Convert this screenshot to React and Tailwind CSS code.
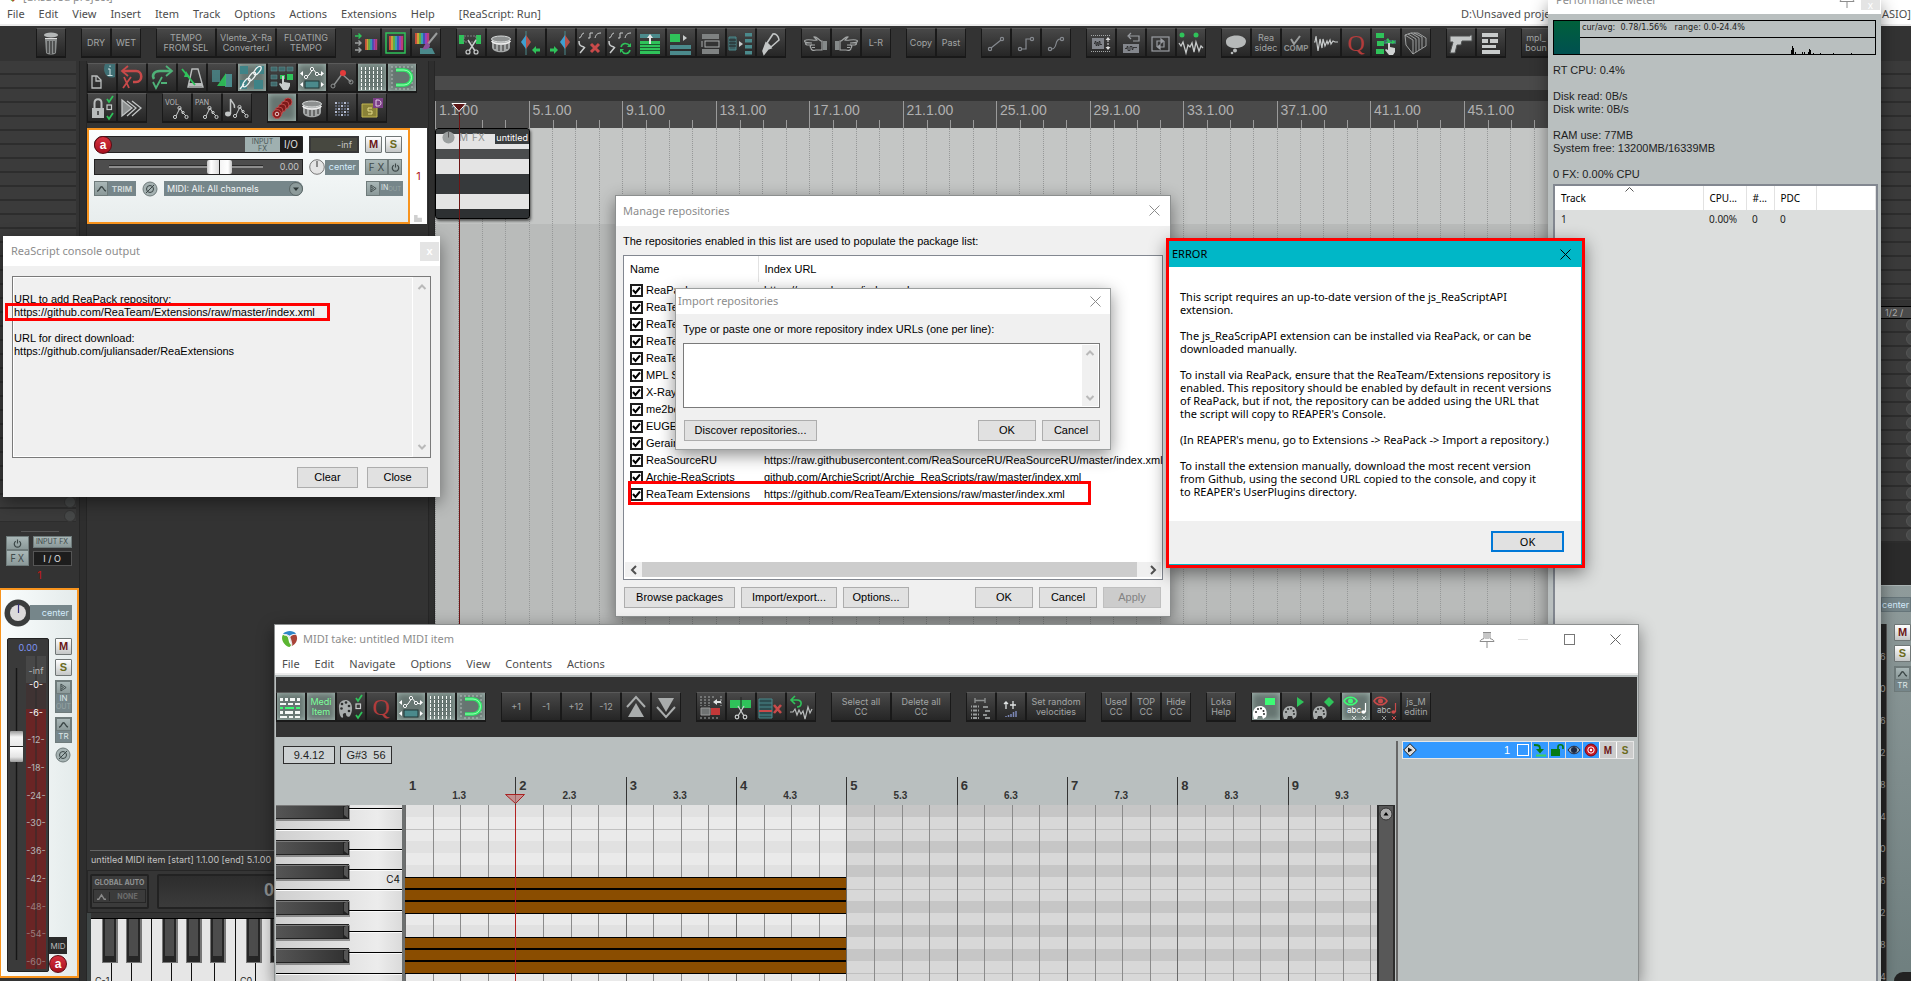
const UI = "font-['Noto_Sans',sans-serif]";
const PIX = "font-['Inter',sans-serif]";
const SHADOW = "shadow-[0_5px_16px_rgba(0,0,0,0.45)]";

/* ---------- toolbar drawings, each on a 28 x 28 field ---------- */
const G = "#2fc35a";
const T = "#4b8a8c";
const W = "#c9cccc";
const R = "#c94a4a";

const Curves = () => (
  <g fill="none" stroke={W}>
    <path d="M2 9c3 0 2-5 5-5M11 9h2V4h3M18 9c1-4 3-5 6-5" />
    <path d="M2 12c0 4 1 5 5 6M3 24l5-6" strokeWidth="1.5" />
  </g>
);
const Magnet = () => (
  <g fill="none">
    <path d="M4 2v24M8 2v2M12 2v2M16 2v2M8 24v3M12 24v3M16 24v3M20 2v3M24 2v24M20 24v2" stroke="#dfe8e4" strokeDasharray="2 2" opacity=".6" />
    <path d="M8 6h8a7 7 0 0 1 0 15H8" stroke="#2de866" strokeWidth="3.6" />
    <path d="M8 6h8a7 7 0 0 1 0 15H8" stroke="#b6ffc9" strokeWidth=".8" />
  </g>
);
const GridLines = () => (
  <path d="M3.500 3v23M7.500 3v23M11.500 3v23M15.500 3v23M19.500 3v23M23.500 3v23" stroke="#f4f8f6" strokeDasharray="3 1" fill="none" />
);
const EnvStretch = () => (
  <g>
    <path d="M7 14l4-3 4-6 4 5 5 1" stroke="#fff" fill="none" />
    <g fill="#4f5f5c" stroke="#fff"><circle cx="8" cy="13" r="1.6" /><circle cx="14" cy="5" r="1.6" /><circle cx="19" cy="10" r="1.6" /></g>
    <rect x="7" y="17" width="14" height="7" fill={T} stroke="#1f3434" />
    <path d="M5 7v5L2 9.500zM23 7v5l3-2.500zM5 18v5l-3-2.500zM23 18v5l3-2.500z" fill="#fff" />
  </g>
);
const Drum = () => (
  <g>
    <path d="M5 10v8c0 7 18 7 18 0v-8z" fill="#a4a7a7" />
    <ellipse cx="14" cy="10" rx="9.500" ry="3" fill="#8d9090" stroke="#d9dcdc" />
    <path d="M8 14v6M12 16v6M16 16v6M20 14v6" stroke="#4a4a4a" strokeWidth="1.300" />
    <path d="M4.500 12c3 4 16 4 19 0" stroke="#eee" strokeWidth="1.300" fill="none" />
  </g>
);
const Check3 = ({ x }) => (
  <g fill="none" stroke={G} strokeWidth="1.8">
    <path d={`M${x} 5l2 3 4-6M${x} 22l2 3 4-6`} />
    <rect x={x} y="11" width="4.500" height="4.500" stroke={W} strokeWidth="1.2" />
  </g>
);
const Palette = ({ fill = "#a9adad", y = 0 }) => (
  <g transform={`translate(0 ${y})`}>
    <path d="M2 14C1 4 15 3 15 14c0 4-1 6-2 8-2 2-4 0-4-2s-4-1-3 2-4 3-4-8z" fill={fill} />
    <g fill="#2d2f2f"><circle cx="5" cy="10" r="1.300" /><circle cx="9" cy="8.500" r="1.300" /><circle cx="12" cy="12" r="1.300" /><circle cx="4.500" cy="14.500" r="1.300" /><circle cx="12" cy="17" r="1.300" /></g>
  </g>
);
const Palette2 = ({ fill = "#a9adad" }) => (
  <g>
    <path d="M2 26c-3-8 1-13 6-13s8 4 6 11l-3 2-1-3H6l-1 3z" fill={fill} />
    <g fill="#2d2f2f"><circle cx="4" cy="19" r="1" /><circle cx="6" cy="16" r="1" /><circle cx="9" cy="15.500" r="1" /><circle cx="11.500" cy="18" r="1" /><circle cx="12" cy="21" r="1" /></g>
  </g>
);
const Hand = ({ flip }) => (
  <g transform={flip ? "translate(28 0) scale(-1 1)" : undefined}>
    <path d="M4 11c4-1 8 1 11 0l-3-3c2-1 4 2 7 4h1v9h-6c-3 1-5 0-5-2-1-1-1-2 0-3H5c-2-1-2-2 0-2h5c-2 0-6 0-7-1-1-1 0-2 1-2z" fill="none" stroke="#a3a6a6" strokeWidth="1.200" />
    <path d="M21 12h4v9h-4z" fill="#858989" />
    <path d="M9 16h4M10 18.500h3" stroke="#a3a6a6" />
  </g>
);
const Rainbow = ({ x, y, w, h }) => {
  const c = ["#c94f3b", "#c9a23b", "#5fae43", "#3ba2af", "#3f55b9", "#9a3fb9", "#b93f7a"];
  return c.map((f, i) => <rect key={f} x={x + (i * w) / 7} y={y} width={w / 7 + 0.2} height={h} fill={f} />);
};
const Env = ({ x = 10, y = 10 }) => (
  <g transform={`translate(${x} ${y})`} fill="none" stroke={W}>
    <path d="M3 12l4-8 3 5 3 3" />
    <circle cx="2" cy="13" r="1.600" /><circle cx="6.500" cy="4" r="1.600" /><circle cx="13.500" cy="13" r="1.600" /><circle cx="10" cy="8.500" r="1.200" />
  </g>
);
const Eye = ({ c }) => (
  <g>
    <path d="M2 8c3-5 10-5 13 0-3 5-10 5-13 0z" fill="none" stroke={c} strokeWidth="1.600" />
    <circle cx="8.500" cy="8" r="2.500" fill={c} />
  </g>
);
const Note = ({ c }) => (
  <g><ellipse cx="21.500" cy="19" rx="2.200" ry="1.700" fill={c} /><path d="M23.500 19v-9" stroke={c} strokeWidth="1.200" /></g>
);

const ICONS = {
  trash: <g><ellipse cx="14" cy="6" rx="7" ry="2.600" fill="#b5b8b8" /><path d="M8 10l1 14c2 2 8 2 10 0l1-14z" fill="#8b8e8e" /><path d="M11 12v12M14 12v13M17 12v12" stroke="#2b2b2b" strokeWidth="1.200" /><path d="M8 9.500h12" stroke="#ddd" /></g>,
  arrowsRainbow: <g><Rainbow x={13} y={10} w={12} h={11} /><path d="M3 7h6M6.500 4.500L9 7 6.500 9.500" stroke={G} fill="none" strokeWidth="1.400" /><path d="M3 14h6M6.500 11.500L9 14l-2.500 2.500M3 21h6M6.500 18.500L9 21l-2.500 2.500" stroke="#9da0a0" fill="none" strokeWidth="1.400" /></g>,
  rainbowFrame: <g><Rainbow x={7} y={7} w={14} h={14} /><rect x="4" y="4" width="19" height="20" fill="none" stroke={G} strokeWidth="1.500" /></g>,
  brush: <g><Rainbow x={3} y={4} w={14} h={11} /><path d="M8 19h12l3 6H8z" fill={T} /><path d="M25 4l-9 11" stroke="#9a9d9d" strokeWidth="2" /><path d="M16 14c-4 0-4 5-6 6 4 1 8 0 8-4z" fill="#8d4f9a" /></g>,
  cut: <g><path d="M2 6h5v9H2zM19 6h5v9h-5z" fill={G} /><path d="M7 7h12v6H7z" fill="none" stroke="#7d8080" strokeDasharray="2 1" /><path d="M11 11l7 11M19 11l-7 11" stroke={W} strokeWidth="1.400" /><g fill="none" stroke={W} strokeWidth="1.200"><circle cx="11" cy="23" r="2" /><circle cx="19" cy="23" r="2" /></g></g>,
  drum: <Drum />,
  diaLeft: <g><path d="M9 2v24" stroke={T} /><path d="M9 6v14l-5-7z" fill="#3f9fd0" /><path d="M9 6v14l5-7z" fill="#b8524a" /><path d="M15 21l4-4v2.500h4v3h-4V25z" fill={G} /></g>,
  diaRight: <g><path d="M18 2v24" stroke={T} /><path d="M18 6v14l-5-7z" fill="#3f9fd0" /><path d="M18 6v14l5-7z" fill="#b8524a" /><path d="M11 21l-4-4v2.500H3v3h4V25z" fill={G} /></g>,
  curveX: <g><Curves /><path d="M14 15l8 8M22 15l-8 8" stroke={R} strokeWidth="3" /></g>,
  curveLoop: <g><Curves /><path d="M14 18c1-4 6-5 9-1M23 21c-1 4-6 5-8 1" fill="none" stroke={G} strokeWidth="1.600" /><path d="M24 14v4h-4zM13 24v-4h4z" fill={G} /></g>,
  upBlock: <g><path d="M3 5h20v4H3z" fill={T} /><path d="M3 12h20v13H3z" fill={G} /><path d="M3 15.500h20M3 18.500h20M3 21.500h20" stroke="#1c5c30" /><path d="M13 5l3 4h-2v6h-2V9h-2z" fill="#e4e6e6" /></g>,
  blockRight: <g><path d="M3 5h10v8H3z" fill={G} /><path d="M16 6l4 3-4 3z" fill={W} /><path d="M3 16h21v4H3zM3 22h21v4H3z" fill={T} /></g>,
  stack: <g><path d="M5 5h17v5H5zM5 20h17v5H5z" fill="#7f8282" /><rect x="8" y="12" width="14" height="6" fill="#333" stroke="#a9acac" /><path d="M5 12v6" stroke="#a9acac" /></g>,
  splitCols: <g><path d="M2 8h7v13H2z" fill="#3d5d60" stroke={T} /><path d="M2 11h7M2 14h7M2 17h7" stroke="#222" /><path d="M12 12l4 3-4 3z" fill={W} /><path d="M18 4h7v3.500h-7zM18 10h7v3.500h-7zM18 16h7v3.500h-7zM18 22h7v3.500h-7z" fill={T} /></g>,
  marker: <g fill="none" stroke="#c2c5c5" strokeWidth="1.600"><path d="M10 14l6-9c3-1 6 3 6 6l-8 7z" /><path d="M9 14l5 5-3 1-4 5-1-3z" fill="#c2c5c5" /></g>,
  handL: <Hand />,
  handR: <Hand flip />,
  ramp: <g fill="none" stroke="#85898f" strokeWidth="1.200"><circle cx="8" cy="20" r="1.600" /><circle cx="20" cy="10" r="1.600" /><path d="M9 19l10-8" /></g>,
  square: <g fill="none" stroke="#85898f" strokeWidth="1.200"><circle cx="8" cy="20" r="1.600" /><circle cx="20" cy="10" r="1.600" /><path d="M9.500 20H14V10h4.500" /></g>,
  smooth: <g fill="none" stroke="#85898f" strokeWidth="1.200"><circle cx="8" cy="20" r="1.600" /><circle cx="20" cy="10" r="1.600" /><path d="M9.500 20c7 0 2-10 9-10" /></g>,
  itemHeight: <g><path d="M4 6.500h20M4 22.500h20" stroke="#a4a7a7" strokeDasharray="1 1" /><path d="M5 9h12v11H5z" fill="#83868c" /><path d="M7 14.500h1v-2h1v4h1v-3h1v3h1v-4h1v3h2" stroke="#222" fill="none" strokeWidth=".8" /><path d="M21 8l2.500 3h-5zM21 21l2.500-3h-5z" fill="#ddd" /><path d="M21 11v7" stroke="#ddd" strokeDasharray="2 1" /></g>,
  undoWave: <g><path d="M6 15h16v9H6z" fill="#83868c" /><path d="M8 19.500h2v-2h1v4h2v-4h2v3h1v-2h4" stroke="#222" fill="none" strokeWidth=".8" /><path d="M12 7h10v5h-6M14 4l-3 3 3 3" stroke="#9a9da2" fill="none" strokeWidth="1.200" /></g>,
  loopBox: <g fill="none" stroke="#9a9da2" strokeWidth="1.200"><rect x="5" y="8" width="17" height="14" /><path d="M10 18v-6h5M17 12v6h-5" /><path d="M14 10l2.500 2-2.500 2zM13 16l-2.500 2 2.500 2z" fill="#9a9da2" /></g>,
  peaks: <g><circle cx="5" cy="6" r="2.500" fill={G} /><circle cx="19" cy="6" r="2.500" fill={G} /><path d="M2 14l2 3 2-4 3 11 2-8 2 2 2-4 2 9 2-10 3 9 2-5 2 2" fill="none" stroke="#c6c9c9" strokeWidth="1.300" /></g>,
  chat: <g fill="#b6b9b9"><path d="M4 13C3 5 23 4 24 12c0 6-7 7-10 7-6 0-10-2-10-6z" /><circle cx="13" cy="21.500" r="2" /><circle cx="10" cy="24" r="1.300" /></g>,
  comp: <path d="M9 10l3 5 6-8" fill="none" stroke="#9a9d9d" strokeWidth="2" />,
  wave: <path d="M2 13h1l1-6 2 15 2-12 2 9 1-9 2 7 2-5 1 3 2-4 1 4 2-3 2 1 3 0" fill="none" stroke="#c6c9c9" strokeWidth="1.200" />,
  greenHand: <g><path d="M4 4h8v5H4zM5 12h7v5H5zM4 20h8v5H4z" fill={G} /><path d="M12 11h12v4H12z" fill="#3f6a6c" /><path d="M13 14l3-2-2-1 2-2 2 3h-1l3 1v-2l4 2-4 2v-1" fill={G} /><path d="M16 14h2v4l5 1v4l-2 3h-4l-4-5 1-1 2 1z" fill="#cfd2d2" /></g>,
  layers: <g fill="none" stroke="#a9acac" strokeWidth=".9"><path d="M3 6l8 5v14l-7-9zM6 5l8 5v13M9 4l8 5v12M12 4l8 4v11M3 6l3-1 3-1h7l8 5v8l-13 8" /></g>,
  gun: <path d="M3 7h20v-1h2v6H15l-1 4h-4l-2 8H3l3-11H3z" fill="#c4c7c7" stroke="#4d4f4f" />,
  rows: <g fill="#c9cccc"><path d="M5 4h16v4H5zM5 10h6v4H5zM13 10h8v4h-8zM5 16h14v3H5zM5 21h18v4H5z" /></g>,
  info: <g><path d="M17 0h10v13c-9 3-13-6-10-13z" fill="#3f6f74" /><path d="M20 5h2v6M19.500 11.500h5M22 1.500V3" stroke="#cfe3e4" fill="none" /><path d="M4 12h5l4 4v8H4zM8 12v5h5" fill="none" stroke="#b9bcbc" strokeWidth="1.300" /></g>,
  undo: <g fill="none" stroke={R}><path d="M5 7h13c7 0 7 11 0 11h-3" strokeWidth="2.600" /><path d="M10 2L4 7l6 5" strokeWidth="1.800" /><path d="M6 13l5 11M13 13L5 24" strokeWidth="1.800" /></g>,
  redo: <g fill="none" stroke="#4fb278"><path d="M23 7H12C5 7 4 12 6 15" strokeWidth="2.600" /><path d="M18 2l6 5-6 5" strokeWidth="1.800" /><path d="M5 18l3 6 6-11M13 19h6" strokeWidth="1.800" /></g>,
  metro: <g fill="none" strokeWidth="1.400"><path d="M14 5l-4 18h15L20 5z" stroke="#b9bcbc" /><path d="M11 20.500h13" stroke="#b9bcbc" strokeWidth="3" /><path d="M4 5l13 16" stroke={G} strokeWidth="1.800" /><path d="M8 7l4 6-6 0z" fill={G} /></g>,
  xfade: <g><path d="M4 6h8v12H4z" fill={T} opacity=".8" /><path d="M17 10h7v13h-7z" fill={T} /><path d="M9 22l9-13v13z" fill={G} opacity=".9" /></g>,
  link: <g><path d="M2 2h8v8H2zM18 2h8v8h-8zM2 16h7v9H2zM16 16h9v9h-9z" fill="#3f8387" /><g fill="none" stroke="#f0f4f4" strokeWidth="1.300"><path d="M2 25l4-5" /><ellipse cx="8.500" cy="18.500" rx="2.300" ry="5" transform="rotate(38 8.500 18.500)" /><ellipse cx="14" cy="12.500" rx="2.300" ry="5" transform="rotate(38 14 12.500)" /><ellipse cx="19.500" cy="6.500" rx="2.300" ry="5" transform="rotate(38 19.500 6.500)" /></g></g>,
  gridHand: <g><path d="M3 3h6v4H3zM11 3h6v4h-6zM19 3h6v4h-6zM3 11h6v4H3zM3 18h6v4H3z" fill="#3f6a6c" stroke="#5f8c8e" strokeWidth=".6" /><path d="M12 11h5v4h-5zM19 10h6v6h-6z" fill={G} /><path d="M14 12h2v6l6 1v3l-2 4h-5l-4-6 1-1 2 1z" fill="#c9cccc" /></g>,
  envStretch: <EnvStretch />,
  envRed: <g><path d="M6 21l8-11M14 10l9 8" stroke="#8d9090" strokeWidth="1.400" /><circle cx="5" cy="22" r="2" fill="none" stroke="#8d9090" /><circle cx="23" cy="18" r="2" fill="none" stroke="#8d9090" /><circle cx="15" cy="9" r="3" fill="#e23b3b" /></g>,
  gridLines: <GridLines />,
  magnet: <Magnet />,
  lock: <g><path d="M4 14h12v10H4z" fill="#b9bcbc" /><path d="M6.500 14V9c0-5 7-5 7 0v5" fill="none" stroke="#b9bcbc" strokeWidth="2" /><path d="M10 17v4" stroke="#333" strokeWidth="1.500" /><Check3 x={19} /></g>,
  ffwd: <g><path d="M4 6l10 8-10 8z" fill="#8d9090" /><path d="M4 6l10 8-10 8zM9 7l9 7-9 8M14 7l9 7-9 8" stroke="#c2c5c5" fill="none" strokeWidth="1.300" /></g>,
  vol: <Env />,
  pan: <Env />,
  noteEnv: <g><ellipse cx="5" cy="20" rx="3" ry="2.400" fill="#c2c5c5" /><path d="M7.500 20V5c1 4 5 4 4 9" fill="none" stroke="#c2c5c5" strokeWidth="1.500" /><Env x={10} y={9} /></g>,
  coil: <g fill="#7d1a1a" stroke="#c05050" strokeWidth=".9">{[0, 1, 2, 3].map((i) => <circle key={i} cx={20 - i * 3} cy={8 + i * 3} r="4" />)}<circle cx="9" cy="20" r="4.500" fill="#8a1c1c" /><circle cx="9" cy="20" r="1.800" fill="none" stroke="#f0dcdc" /></g>,
  dots: <g>{[0, 1, 2, 3, 4].flatMap((r) => [0, 1, 2, 3, 4].map((c) => <rect key={`${r}${c}`} x={7 + c * 3} y={8 + r * 3} width="2" height="2" fill={(r + c) % 3 ? "#5f6675" : "#b3bbd0"} />))}</g>,
  sd: <g><path d="M4 10h15v13H4z" fill="#8a8238" stroke="#c2b64f" /><path d="M14 14h-4v3h4v3h-4" fill="none" stroke="#e6dc8a" /><path d="M15 4h10v10H15z" fill="#7b3f86" /><path d="M18 6h2c4 0 4 6 0 6h-2z" fill="none" stroke="#e3c9e8" /></g>,
  midiRows: <g fill="#f4f8f6"><path d="M3 5h3v3H3zM8 5h3v3H8zM13 5h5v3h-5zM20 5h3v3h-3zM3 10h6v2H3zM11 10h5v2h-5zM18 10h5v2h-5zM3 18h3v3H3zM8 18h8v3H8zM18 18h5v3h-5zM3 23h7v2H3zM12 23h4v2h-4zM18 23h5v2h-5z" /><path d="M3 14h3v2H3zM8 14h9v2H8zM19 14h4v2h-4z" fill="#3dfc75" /></g>,
  paletteCheck: <g><Palette y={1} /><Check3 x={19} /></g>,
  up: <g><path d="M5 14l9-10 9 10" fill="none" stroke="#aaadad" strokeWidth="2" /><path d="M14 10l8 14H6z" fill="#aaadad" /></g>,
  down: <g><path d="M5 14l9 10 9-10" fill="none" stroke="#aaadad" strokeWidth="2" /><path d="M14 19L22 5H6z" fill="#aaadad" /></g>,
  trimRed: <g><path d="M4 15h9v7H4z" fill="#6f7272" stroke="#999" /><path d="M14 15h9v7h-9z" fill="#c23838" /><path d="M4 3v10M8 3v10M12 3v10M4 24v3M8 24v3M12 24v3M16 24v3M20 24v3M16 3v3M24 3v10" stroke="#a6a9a9" strokeDasharray="2 1" /><path d="M16 9l4-3v2h4v2h-4v2z" fill="#dfe2e2" /></g>,
  cutMidi: <g><path d="M3 7h21v8H3z" fill={G} /><path d="M14 4v12" stroke="#222" /><path d="M11 13l6 10M17 13l-6 10" stroke={W} strokeWidth="1.300" /><g fill="none" stroke={W} strokeWidth="1.200"><circle cx="10" cy="24" r="1.800" /><circle cx="18" cy="24" r="1.800" /></g></g>,
  listX: <g><path d="M2 6h13v19H2z" fill="#2d4d50" stroke={T} /><path d="M2 10h13M2 14h13M2 22h13" stroke={T} /><path d="M2 18h13" stroke={R} strokeWidth="2" /><path d="M17 12l7 8M24 12l-7 8" stroke={R} strokeWidth="2.600" /></g>,
  undoEcg: <g fill="none"><path d="M8 3L4 7l4 4M4 7h6c6 0 5 7 0 7" stroke={G} strokeWidth="1.600" /><path d="M3 19h3l2-3 2 6 2-5 2 4 2-3 2 8 3-12 2 6 2-4" stroke="#b9bcbc" strokeWidth="1.200" /></g>,
  velRows: <g><path d="M8 5v5M18 5v5M8 7.500h10" stroke="#8d9090" strokeWidth="1.400" /><path d="M4 13.500h8M4 17.500h8M4 21.500h8M4 25h8" stroke="#9a9d9d" strokeWidth="2" strokeDasharray="1 1 4 1" /><path d="M16 14h5M18 18h5M16 22h4M18 25h5" stroke="#8d9090" strokeWidth="2" /></g>,
  arrowsUp: <g stroke="#dfe2e2" fill="none"><path d="M9 9v7M7 11l2-2 2 2M16 8v8M13 12h6" strokeWidth="1.300" /><path d="M9 24v-1M11.500 24v-2M14 24v-3M16.500 24v-5M19 24v-6" stroke="#7c88b8" strokeWidth="1.500" /></g>,
  palRect: <g><path d="M13 5h10v7H13z" fill="#3dfc75" /><Palette2 fill="#fff" /></g>,
  palTri: <g><path d="M15 4l7 5-7 5z" fill={G} /><Palette2 /></g>,
  palDia: <g><path d="M17 4l5 5-5 5-5-5z" fill={G} /><Palette2 /></g>,
  eyeG: <g><Eye c="#3dfc75" /><Note c="#fff" /><path d="M10 23l4 4M14 23l-4 4M20 23l4 4M24 23l-4 4" stroke="#cfd6d4" /></g>,
  eyeR: <g><Eye c={R} /><Note c={R} /><path d="M10 23l4 4M14 23l-4 4" stroke="#8d9090" /><path d="M20 23l4 4M24 23l-4 4" stroke={R} /></g>,
};
const OVER = {
  comp: <span className="absolute inset-x-0 bottom-[3px] text-[8px] font-bold leading-[9px] text-[#8f9292]">COMP</span>,
  vol: <span className="absolute left-[2px] top-[4px] text-[7px] leading-[9px] text-[#b9bcbc]">VOL</span>,
  pan: <span className="absolute left-[2px] top-[4px] text-[7px] leading-[9px] text-[#b9bcbc]">PAN</span>,
  eyeG: <span className="absolute left-[5px] top-[13px] text-[8px] leading-[9px] text-white">abc</span>,
  eyeR: <span className="absolute left-[5px] top-[13px] text-[8px] leading-[9px] text-[#b9bcbc]">abc</span>,
};
const NORMAL = "bg-linear-to-b from-[#484848] to-[#262626] border-t-[#5a5a5a] text-[#a2a5a5]";
const ACTIVE = "bg-[#667571] shadow-[inset_0_0_6px_#a7bab4] border-t-[#5a5a5a] text-[#7dff9b]";

/* An item is "icon", "*icon" when switched on, or [label, "w"?] for a text key. */
function Tool({ item }) {
  if (Array.isArray(item)) {
    const [label, kind] = item;
    return (
      <button className={`flex h-[30px] shrink-0 items-center justify-center overflow-hidden border border-b-2 border-[#191919] text-center text-[9px] leading-[10px] whitespace-pre ${kind === "w" ? "w-[60px]" : "w-[30px]"} ${kind === "on" ? ACTIVE : NORMAL}`}>
        {label}
      </button>
    );
  }
  if (item === "Q") return <button className={`flex h-[30px] w-[30px] shrink-0 items-center justify-center border border-b-2 border-[#191919] font-['Liberation_Serif',serif] text-[24px] leading-6 ${NORMAL}`}><span className="text-[#b23c3c]">Q</span></button>;
  const on = item[0] === "*";
  const name = on ? item.slice(1) : item;
  return (
    <button aria-label={name} className={`relative h-[30px] w-[30px] shrink-0 overflow-hidden border border-b-2 border-[#191919] ${on ? ACTIVE : NORMAL}`}>
      <svg viewBox="0 0 28 28" className="block h-[28px] w-[28px]">{ICONS[name]}</svg>
      {OVER[name]}
    </button>
  );
}
function Toolbar({ groups, className = "" }) {
  return (
    <div className={`flex shrink-0 gap-[15px] ${PIX} ${className}`}>
      {groups.map((g, i) => <div key={i} className="flex shrink-0">{g.map((it, j) => <Tool key={j} item={it} />)}</div>)}
    </div>
  );
}

const MAIN_TOOLS = [
  ["trash"],
  [["DRY"], ["WET"]],
  [["TEMPO\nFROM SEL", "w"], ["Vlente_X-Ra\nConverter.l", "w"], ["FLOATING\nTEMPO", "w"]],
  ["arrowsRainbow", "rainbowFrame", "brush"],
  ["cut", "drum", "diaLeft", "diaRight", "curveX", "curveLoop", "upBlock", "blockRight", "stack", "splitCols", "marker"],
  ["handL", "handR", ["L-R"]],
  [["Copy"], ["Past"]],
  ["ramp", "square", "smooth"],
  ["itemHeight", "undoWave", "loopBox", "peaks"],
  ["chat", ["Rea\nsidec"], "comp", "wave", "Q", "greenHand", "layers"],
  ["gun", "rows"],
  [["mpl_\nboun"]],
];
const TCP_ROW1 = [["info", "undo", "redo", "metro", "xfade", "*link", "gridHand", "*envStretch", "envRed", "*gridLines", "*magnet"]];
const TCP_ROW2 = [["lock", "ffwd"], ["vol", "pan", "noteEnv"], ["*coil", "drum", "dots", "sd"]];
const MIDI_TOOLS = [
  ["*midiRows", ["Medi\nItem", "on"], "paletteCheck", "Q", "*envStretch", "*gridLines", "*magnet"],
  [["+1"], ["-1"], ["+12"], ["-12"], "up", "down"],
  ["trimRed", "cutMidi", "listX", "undoEcg"],
  [["Select all\nCC", "w"], ["Delete all\nCC", "w"]],
  ["velRows", "arrowsUp", ["Set random\nvelocities", "w"]],
  [["Used\nCC"], ["TOP\nCC"], ["Hide\nCC"]],
  [["Loka\nHelp"]],
  ["*palRect", "palTri", "palDia", "*eyeG", "eyeR", ["js_M\neditin"]],
];

/* ---------- small shared controls ---------- */
const Cross = ({ className = "text-[#8c8c8c]" }) => (
  <svg viewBox="0 0 11 11" className={`h-[11px] w-[11px] ${className}`} stroke="currentColor" fill="none"><path d="M.5.5l10 10M10.500.5l-10 10" /></svg>
);
const Chev = ({ d, className = "text-[#b9b9b9]" }) => (
  <svg viewBox="0 0 10 10" className={`h-[10px] w-[10px] ${className}`} stroke="currentColor" strokeWidth="2" fill="none">
    <path d={{ up: "M1.500 7L5 3.500 8.500 7", down: "M1.500 3L5 6.500 8.500 3", left: "M7 1L3 5l4 4", right: "M3 1l4 4-4 4" }[d]} />
  </svg>
);
const Push = ({ children, className = "", ...p }) => (
  <button className={`h-[21px] border border-[#adadad] bg-[#e1e1e1] text-black ${className}`} {...p}>{children}</button>
);
const GREY = "border border-[#6f7b7b] bg-linear-to-b from-[#a9b7b7] to-[#8b9999]";
const TEAL = "bg-[#76868a]";
const MS = ({ children, className = "" }) => (
  <button className={`flex h-[17px] w-[17px] shrink-0 items-center justify-center rounded-[1px] border border-[#6f7676] bg-linear-to-b from-white to-[#c4c7c7] font-['Liberation_Sans',sans-serif] text-[11px] font-bold ${className}`}>{children}</button>
);
const Arm = ({ className = "" }) => (
  <button className={`flex h-[18px] w-[18px] shrink-0 items-center justify-center rounded-full border border-[#5d0a12] bg-linear-to-b from-[#d6323f] to-[#a80f1e] font-['Liberation_Sans',sans-serif] text-[12px] font-bold leading-3 text-white ${className}`}>a</button>
);
const EnvGlyph = () => <svg viewBox="0 0 12 10" className="h-[9px] w-[11px]" stroke="#3b4646" strokeWidth="1.500" fill="none"><path d="M1 8c3 0 3-5 5-5s2 4 5 5" /></svg>;
const PlayGlyph = () => <svg viewBox="0 0 8 10" className="h-[9px] w-[7px]" stroke="#3b4646" fill="none"><path d="M1 1v8l6-4zM1 3l3 2-3 2" /></svg>;
const Power = () => <svg viewBox="0 0 10 10" className="h-[9px] w-[9px]" stroke="#3b4646" strokeWidth="1.300" fill="none"><path d="M3 2.500a3.600 3.600 0 1 0 4 0M5 .5V5" /></svg>;
const Phase = () => (
  <button aria-label="Phase" className="h-[16px] w-[16px] shrink-0">
    <svg viewBox="0 0 16 16" fill="none"><circle cx="8" cy="8" r="7" fill="#a5b2b2" stroke="#6f7b7b" /><circle cx="8" cy="8" r="3.500" stroke="#3b4646" /><path d="M4 12l8-8" stroke="#3b4646" /></svg>
  </button>
);
const Menu = ({ items, className = "" }) => (
  <nav className={`flex shrink-0 items-center text-[#4d4d4d] ${UI} text-[11px] ${className}`}>
    {items.map((m) => <button key={m} className="px-[7px]">{m}</button>)}
  </nav>
);
const Pin = () => (
  <svg viewBox="0 0 16 18" className="h-[18px] w-[16px]" stroke="#8c8c8c" fill="none"><path d="M4 1.500h8M5 1.500v6M11 1.500v6M7 2v6M9 2v6M5 7.500c-3 1-4 2-4 3h14c0-1-1-2-4-3M8 11v6" /></svg>
);

/* ---------- left mixer dock ---------- */
const SCALE = ["-0-", "-6-", "-12-", "-18-", "-24-", "-30-", "-36-", "-42-", "-48-", "-54-", "-60-"];
const STRIPES = "bg-[repeating-linear-gradient(to_bottom,#3b3b3b_0px,#3b3b3b_12px,#2d2d2d_12px,#2d2d2d_14px)]";

function LeftDock() {
  return (
    <aside className="flex w-[79px] shrink-0 flex-col bg-[#333]">
      <div className={`mr-[3px] flex min-h-0 flex-1 flex-col items-end justify-end gap-[2px] overflow-hidden ${STRIPES}`}>
        {[0, 1, 2].map((i) => <span key={i} className="h-[12px] w-[12px] shrink-0 rounded-full border border-[#343434] bg-[#464848]" />)}
      </div>
      <div className="flex h-[66px] shrink-0 flex-col items-center pt-[9px]">
        <span className="h-px w-[38px] bg-[#565656]" />
        <div className="mt-1 mr-[2px] flex gap-1">
          <div className="flex w-[23px] flex-col">
            <button aria-label="FX power" className={`flex h-[14px] items-center justify-center ${GREY}`}><Power /></button>
            <button className={`h-[16px] text-[10px] leading-[12px] text-[#3f4a4a] ${GREY}`}>F X</button>
          </div>
          <div className={`flex w-[39px] flex-col gap-[3px] ${PIX}`}>
            <button className={`h-[12px] whitespace-nowrap text-[7px] leading-[10px] text-[#3f4a4a] ${GREY}`}>INPUT FX</button>
            <button className="h-[15px] border border-[#555] bg-[#1d1d1d] text-[9px] leading-[12px] text-[#e0e0e0]">I / O</button>
          </div>
        </div>
        <span className={`mt-[2px] text-[11px] leading-[14px] text-[#c01818] ${PIX}`}>1</span>
      </div>
      <div className="mb-[3px] flex h-[390px] shrink-0 flex-col border-2 border-l-1 border-[#f8941e] bg-linear-to-r from-[#fafdfd] to-[#e4ebeb]">
        <div className="flex h-[45px] shrink-0 items-center pl-[3px]">
          <svg viewBox="0 0 28 28" className="h-[28px] w-[28px]"><circle cx="14" cy="14" r="13.500" fill="#3b3d3d" /><circle cx="14" cy="14" r="8" fill="#dcdada" /><path d="M14.500 5v9" stroke="#35307c" strokeWidth="1.200" /></svg>
          <span className={`-ml-[2px] flex h-[15px] w-[42px] items-center justify-end pr-[3px] text-[9px] text-[#d4ebfb] ${TEAL} ${PIX}`}>center</span>
        </div>
        <div className="flex min-h-0 flex-1 gap-[6px] pt-[3px] pl-[6px]">
          <div className={`mb-1 flex w-[42px] flex-col rounded-[2px] border border-[#222] bg-[#3a3a3a] ${PIX}`}>
            <span className="h-[17px] shrink-0 text-center text-[9px] leading-[17px] text-[#7d92f0]">0.00</span>
            <div className="flex min-h-0 flex-1">
              <div className="relative w-[18px]">
                <input type="range" aria-label="Track volume" defaultValue="76" className="absolute top-[12px] bottom-[13px] left-[2px] h-[292px] w-[13px] appearance-none bg-linear-to-r from-transparent from-40% via-[#161616] to-transparent to-60% [direction:rtl] [writing-mode:vertical-lr] [&::-webkit-slider-thumb]:h-[31px] [&::-webkit-slider-thumb]:w-[13px] [&::-webkit-slider-thumb]:appearance-none [&::-webkit-slider-thumb]:rounded-[1px] [&::-webkit-slider-thumb]:bg-[linear-gradient(#999_0px,#f4f4f4_6px,#e8e8e8_15px,#222_15px,#222_16px,#fff_16px,#e4e4e4_26px,#9a9a9a_31px)]" />
              </div>
              <div className="relative mb-[2px] flex w-[20px] flex-col bg-[linear-gradient(#474747_0px,#474747_27px,#3f3333_27px,#3f3333_53px,#6a2525_53px)] text-center text-[9px] leading-[11px] text-[#b8b8b8]">
                <span className="absolute inset-y-0 left-[9px] w-[2px] bg-[#2b2b2b]/50" />
                <span className="relative mt-[9px] h-[11px] shrink-0">-inf</span>
                <div className="relative mt-[3px] mb-[2px] flex min-h-0 flex-1 flex-col items-center justify-between">
                  {SCALE.map((s, i) => <span key={s} className={i < 2 ? "text-white" : i > 7 ? "text-[#9a7f7f]" : ""}>{s}</span>)}
                </div>
              </div>
            </div>
          </div>
          <div className="flex flex-col gap-[4px]">
            <MS className="text-[#6b1717]">M</MS>
            <MS className="text-[#6a6a1b]">S</MS>
            <div className={`flex w-[17px] flex-col border border-[#6f7b7b] text-center text-[8px] leading-[9px] ${TEAL} ${PIX}`}>
              <button aria-label="Monitor" className={`flex h-[13px] items-center justify-center ${GREY}`}><PlayGlyph /></button>
              <span className="text-[#dfe6e6]">IN</span><span className="pb-[1px] text-[7px] leading-[8px] text-[#97a5a5]">OUT</span>
            </div>
            <div className={`flex w-[17px] flex-col border border-[#6f7b7b] text-center text-[8px] leading-[11px] ${TEAL} ${PIX}`}>
              <button aria-label="Envelope" className={`flex h-[13px] items-center justify-center ${GREY}`}><EnvGlyph /></button>
              <span className="text-[#dfe6e6]">TR</span>
            </div>
            <Phase />
            <div className="mt-auto mb-[3px] -ml-[6px] flex flex-col gap-[1px]">
              <span className={`flex h-[17px] w-[18px] items-center justify-center bg-[#2a2a2a] text-[8px] text-[#bbb] ${PIX}`}>MID</span>
              <Arm />
            </div>
          </div>
        </div>
      </div>
    </aside>
  );
}

/* ---------- track panel ---------- */
function TrackPanel() {
  return (
    <div className="flex h-[96px] shrink-0 pr-[1px]">
      <div className={`flex flex-1 flex-col gap-[6px] border-2 border-[#f8941e] bg-linear-to-b from-[#fbfefe] to-[#e8eded] px-[5px] pt-[6px] text-[9px] ${PIX}`}>
        <div className="flex h-[17px] gap-[6px]">
          <div className="flex w-[209px] rounded-l-full border border-[#222] bg-[#4d4d4d]">
            <Arm className="-my-[1px] -ml-[1px]" />
            <span className="flex-1" />
            <button className="w-[35px] bg-[#9fb0b0] text-[7px] leading-[7px] text-[#4b5858]">INPUT<br />FX</button>
            <button className="w-[22px] bg-[#1d1d1d] text-[10px] leading-[15px] text-[#e0e0e0]">I/O</button>
          </div>
          <div className="flex w-[50px] items-center justify-end border-2 border-[#383838] bg-[#474840] pr-[5px] text-[#c4c4c4]">-inf</div>
          <div className="flex gap-[3px]"><MS className="text-[#6b1717]">M</MS><MS className="text-[#6a6a1b]">S</MS></div>
        </div>
        <div className="flex h-[16px] gap-[6px]">
          <label className="flex w-[209px] items-center border border-[#222] bg-[#4d4d4d] pl-[14px] text-[#c4c4c4]">
            <input type="range" aria-label="Volume" defaultValue="76" className="h-[14px] w-[154px] appearance-none bg-[linear-gradient(transparent_5px,#2b2b2b_5px,#2b2b2b_6px,#8d8d8d_6px,#8d8d8d_8px,transparent_8px)] [&::-webkit-slider-thumb]:h-[14px] [&::-webkit-slider-thumb]:w-[25px] [&::-webkit-slider-thumb]:appearance-none [&::-webkit-slider-thumb]:rounded-[2px] [&::-webkit-slider-thumb]:bg-[#e6e6e6] [&::-webkit-slider-thumb]:bg-[linear-gradient(to_right,#c4c4c4_0px,#fff_4px,#dcdcdc_12px,#222_12px,#222_13px,#f4f4f4_13px,#fff_21px,#c4c4c4_25px)]" />
            <span className="ml-auto pr-[3px]">0.00</span>
          </label>
          <div className="flex w-[50px] items-center">
            <svg viewBox="0 0 16 16" className="h-[16px] w-[16px]"><circle cx="8" cy="8" r="7.300" fill="#e4e4e4" stroke="#777" /><path d="M8 2v6" stroke="#333" /></svg>
            <span className={`flex h-[15px] flex-1 items-center justify-end pr-[3px] text-[#d4ebfb] ${TEAL}`}>center</span>
          </div>
          <div className="flex w-[37px]"><button className={`w-[23px] text-[10px] leading-3 text-[#3f4a4a] ${GREY}`}>F X</button><button aria-label="Bypass" className={`flex w-[14px] items-center justify-center ${GREY}`}><Power /></button></div>
        </div>
        <div className="flex h-[15px] gap-[6px]">
          <div className={`flex w-[42px] items-center ${TEAL}`}><button aria-label="Envelopes" className={`flex h-[15px] w-[14px] items-center justify-center ${GREY}`}><EnvGlyph /></button><span className="flex-1 text-center text-[8px] font-bold text-[#cfd8d8]">TRIM</span></div>
          <Phase />
          <div className="relative flex w-[139px]">
            <select aria-label="MIDI input" className={`w-full appearance-none rounded-r-full pl-[3px] text-[#eef2f2] ${TEAL}`}><option>MIDI: All: All channels</option></select>
            <svg viewBox="0 0 14 14" className="pointer-events-none absolute top-[1px] right-0 h-[14px] w-[14px]"><circle cx="7" cy="7" r="6.500" fill="#8d9b9b" stroke="#5a6666" /><path d="M4 5.500h6L7 9z" fill="#2d3636" /></svg>
          </div>
          <div className={`ml-auto flex w-[37px] items-center text-[7px] ${TEAL}`}><button aria-label="Record monitor" className={`flex h-[15px] w-[14px] shrink-0 items-center justify-center ${GREY}`}><PlayGlyph /></button><span className="pl-[1px] text-[#dfe6e6]">IN</span><span className="text-[6px] text-[#97a5a5]">OUT</span></div>
        </div>
      </div>
      <div className="relative flex w-[17px] flex-col items-center justify-center bg-white">
        <span className={`text-[11px] text-[#b01818] ${PIX}`}>1</span>
        <svg viewBox="0 0 9 8" className="absolute right-[5px] bottom-[2px] h-[7px] w-[8px]"><path d="M0 0h4v3h5v5H0z" fill="#d0d0d0" /></svg>
      </div>
    </div>
  );
}

/* ---------- arrange view ---------- */
const BARS = [1, 5, 9, 13, 17, 21, 25, 29, 33, 37, 41, 45];
function Arrange() {
  return (
    <section className="relative flex min-w-0 flex-1 flex-col overflow-hidden bg-[#333]">
      <div className="mt-[15px] h-[14px] shrink-0 bg-[#4a4a4a]" />
      <div className="mt-[11px] h-[27px] shrink-0 overflow-hidden bg-[#4a4a4a]">
        <div className="grid h-full w-[1122px] grid-cols-12">
          {BARS.map((b) => (
            <div key={b} className="flex flex-col justify-between border-l border-[#9a9a9a]">
              <span className="pl-[3px] font-['Liberation_Sans',sans-serif] text-[14px] leading-[18px] text-[#b0b0b0]">{b}.1.00</span>
              <div className="grid h-[8px] grid-cols-4"><span /><span className="border-l border-[#9a9a9a]" /><span className="border-l border-[#9a9a9a]" /><span className="border-l border-[#9a9a9a]" /></div>
            </div>
          ))}
        </div>
      </div>
      <div className="relative flex-1 overflow-hidden bg-[linear-gradient(#c4c6c5_0px,#c4c6c5_96px,#b9bbba_96px)]">
        <div className="grid h-full w-[1122px] grid-cols-[repeat(48,minmax(0,1fr))]">
          {Array.from({ length: 48 }, (_, i) => <span key={i} className="border-l border-dotted border-[#969898]" />)}
        </div>
        <div className="absolute top-0 left-0 h-[91px] w-[95px] overflow-hidden rounded-[3px] border border-black bg-[linear-gradient(#3a3d3e_0px,#3a3d3e_5px,#e4e4e4_5px,#e4e4e4_20px,#4b4d4e_20px,#4b4d4e_30px,#e4e4e4_30px,#e4e4e4_45px,#36393b_45px,#36393b_65px,#e4e4e4_65px,#e4e4e4_80px,#2d3032_80px)] shadow-[1px_2px_3px_rgba(0,0,0,0.6)]">
          <div className={`flex h-[17px] items-center gap-[4px] pl-[6px] text-[10px] text-[#8e9191] ${PIX}`}>
            <svg viewBox="0 0 14 14" className="h-[13px] w-[13px]"><circle cx="7" cy="7" r="6.500" fill="#9a9e9e" /><path d="M7 1v6" stroke="#555" /></svg>
            <span>M</span><span>FX</span>
            <span className="ml-auto bg-[#3a3d3e] px-px text-[9px] leading-[12px] text-white">untitled</span>
          </div>
        </div>
      </div>
      <div className="pointer-events-none absolute inset-y-0 left-[16px] flex w-[16px] flex-col items-center">
        <svg viewBox="0 0 16 9" className="mt-[42px] h-[9px] w-[16px] shrink-0"><path d="M1 .5h14L8 8.500z" fill="#5d1616" stroke="#fff" /></svg>
        <span className="w-px flex-1 bg-[#6e1515]" />
      </div>
    </section>
  );
}

/* ---------- right dock ---------- */
function RightDock() {
  return (
    <aside className="flex w-[30px] shrink-0 flex-col overflow-hidden bg-[#333]">
      <div className={`h-[239px] shrink-0 ${STRIPES}`} />
      <div className={`mt-[6px] h-[13px] shrink-0 border-y border-black bg-[#4a4a4a] pl-[4px] text-[9px] leading-[11px] whitespace-nowrap text-[#b0b0b0] ${PIX}`}>1/2 /</div>
      <div className={`h-[224px] shrink-0 overflow-hidden ${STRIPES}`}>
        {Array.from({ length: 16 }, (_, i) => <span key={i} className="mb-[2px] ml-[25px] block h-[12px] w-[12px] rounded-full border border-[#555] bg-[#484a4a]" />)}
      </div>
      <div className="h-[42px] shrink-0 bg-[#2b2b2b]" />
      <div className="flex min-h-0 flex-1 flex-col border-t border-[#a9b3b3] bg-linear-to-b from-[#8f9b9b] to-[#6f7f7f]">
        <span className={`mt-[11px] h-[15px] shrink-0 border border-[#66757a] text-[9px] leading-[13px] text-[#d4ebfb] ${TEAL} ${PIX}`}>center</span>
        <div className="mt-[12px] flex flex-1 justify-between overflow-hidden">
          <div className={`w-[6px] shrink-0 overflow-hidden border-r border-[#555] bg-[#262626] pt-[27px] text-[9px] leading-[12px] text-[#a5a5a5] ${PIX}`}>
            {["6", "0", "6", "2", "8", "4", "0", "6", "2", "8", "4"].map((n, i) => <div key={i} className="-ml-px h-[32px]">{n}</div>)}
          </div>
          <div className="flex flex-col gap-[4px]">
            <MS className="text-[#6b1717]">M</MS>
            <MS className="text-[#6a6a1b]">S</MS>
            <div className={`flex w-[17px] flex-col border border-[#6f7b7b] text-center text-[8px] leading-[11px] ${TEAL} ${PIX}`}>
              <button aria-label="Envelope" className={`flex h-[13px] items-center justify-center ${GREY}`}><EnvGlyph /></button>
              <span className="text-[#dfe6e6]">TR</span>
            </div>
            <span className="mt-auto h-[9px] w-[17px] rounded-tl-full bg-[#222]" />
          </div>
        </div>
      </div>
    </aside>
  );
}

/* ---------- floating windows ---------- */
function PerformanceMeter() {
  return (
    <section className={`absolute inset-y-0 right-[30px] flex w-[333px] flex-col bg-[#b9bfbf] px-[5px] font-['Liberation_Sans',sans-serif] text-[11px] leading-[13px] text-[#1d1d1d] ${SHADOW}`}>
      <header className={`-mx-[5px] flex h-[14px] shrink-0 items-start overflow-hidden bg-white pl-2 text-[#8c8c8c] ${UI}`}>
        <span className="-mt-[8px] flex-1 text-[11px] leading-[16px]">Performance Meter</span>
        <span className="-mt-[9px] mr-[6px]"><Pin /></span>
        <button aria-label="Close meter" className="mr-px h-[10px] w-[19px] bg-[#e4e4e4] text-[10px] leading-[8px] text-white">x</button>
      </header>
      <div className="mt-[6px] flex h-[35px] shrink-0 border border-black">
        <span className="w-[26px] bg-linear-to-b from-[#00603a] to-[#005050]" />
        <div className="flex flex-1 flex-col">
          <span className="h-[17px] border-b border-black pl-[2px] text-[9px] leading-[12px] font-['DejaVu_Sans_Condensed',sans-serif] whitespace-pre">cur/avg:  0.78/1.56%   range: 0.0-24.4%</span>
          <svg viewBox="0 0 298 16" className="h-[16px] w-full" preserveAspectRatio="xMaxYMid meet" stroke="#000" fill="none" shapeRendering="crispEdges"><path d="M214.500 16V8M215.500 16v-6M213.500 16v-4M217.500 16v-2M224.500 16v-2M226.500 16v-2M231.500 16v-5M232.500 16v-4M230.500 16v-2M235.500 16v-1M242.500 16v-1M256.500 16v-1M274.500 16v-1" /></svg>
        </div>
      </div>
      <p className="mt-[9px]">RT CPU: 0.4%</p>
      <p className="mt-[13px]">Disk read: 0B/s</p>
      <p>Disk write: 0B/s</p>
      <p className="mt-[13px]">RAM use: 77MB</p>
      <p>System free: 13200MB/16339MB</p>
      <p className="mt-[13px]">0 FX: 0.00% CPU</p>
      <div className="relative mt-[3px] -mr-[2px] flex-1 border-2 border-[#828790] border-b-0 bg-[#dcdedd]">
        <table className="w-full table-fixed text-left">
          <colgroup><col className="w-[148px]" /><col className="w-[43px]" /><col className="w-[28px]" /><col className="w-[42px]" /><col /></colgroup>
          <thead><tr className={`h-[24px] bg-white text-black ${UI} text-[10px]`}>{["Track", "CPU...", "#...", "PDC", ""].map((h) => <th key={h} className="border-r border-[#e2e2e2] p-0 pl-[6px] font-normal">{h}</th>)}</tr></thead>
          <tbody><tr className={`h-[18px] ${UI} text-[10px]`}>{["1", "0.00%", "0", "0", ""].map((h, i) => <td key={i} className="p-0 pl-[6px]">{h}</td>)}</tr></tbody>
        </table>
        <svg viewBox="0 0 9 5" className="absolute top-[1px] left-[70px] h-[5px] w-[9px]" stroke="#555" fill="none"><path d="M.5 4.500l4-4 4 4" /></svg>
      </div>
    </section>
  );
}

function ConsoleWindow() {
  return (
    <section className={`absolute top-[236px] left-[3px] flex h-[261px] w-[437px] flex-col bg-[#f0f0f0] text-[11px] font-['Liberation_Sans',sans-serif] ${SHADOW}`}>
      <header className="flex h-[30px] shrink-0 items-center justify-between bg-white pr-px pl-[8px]">
        <h2 className={`text-[#8c8c8c] ${UI} text-[11px]`}>ReaScript console output</h2>
        <button aria-label="Close console" className="h-[19px] w-[19px] bg-[#e4e4e4] text-[11px] leading-[16px] font-bold text-white">x</button>
      </header>
      <div className="mx-[9px] mt-[10px] flex h-[182px] border border-[#7a7a7a]">
        <div className="flex-1 border border-white pt-[15px] leading-[13px] text-black">
          <p>URL to add ReaPack repository:</p>
          <p>https://github.com/ReaTeam/Extensions/raw/master/index.xml</p>
          <p className="mt-[13px]">URL for direct download:</p>
          <p>https://github.com/juliansader/ReaExtensions</p>
        </div>
        <div className="flex w-[17px] flex-col items-center justify-between py-[5px]"><Chev d="up" /><Chev d="down" /></div>
      </div>
      <div className="mt-[9px] flex justify-end gap-[9px] pr-[12px]"><Push className="w-[61px]">Clear</Push><Push className="w-[61px]">Close</Push></div>
      <span className="pointer-events-none absolute top-[67px] left-[2px] h-[18px] w-[325px] border-3 border-[#f00]" />
    </section>
  );
}

const REPOS = [
  ["ReaPack", "https://reapack.com/index.xml"], ["ReaTeam"], ["ReaTeam"], ["ReaTeam"], ["ReaTeam"], ["MPL Sc"], ["X-Raym"], ["me2beats"], ["EUGEN"], ["Geraint"],
  ["ReaSourceRU", "https://raw.githubusercontent.com/ReaSourceRU/ReaSourceRU/master/index.xml"],
  ["Archie-ReaScripts", "github.com/ArchieScript/Archie_ReaScripts/raw/master/index.xml"],
  ["ReaTeam Extensions", "https://github.com/ReaTeam/Extensions/raw/master/index.xml"],
];
function ManageWindow() {
  return (
    <section className={`absolute top-[195px] left-[615px] flex h-[422px] w-[556px] flex-col border border-[#8c8f8f] bg-[#f0f0f0] text-[11px] text-black font-['Liberation_Sans',sans-serif] ${SHADOW}`}>
      <header className="flex h-[30px] shrink-0 items-center justify-between bg-white pr-[10px] pl-[7px]">
        <h2 className={`text-[#8c8c8c] ${UI}`}>Manage repositories</h2>
        <button aria-label="Close window" className="-mt-[2px]"><Cross /></button>
      </header>
      <p className="mt-[8px] ml-[7px] leading-[14px]">The repositories enabled in this list are used to populate the package list:</p>
      <div className="mx-[7px] mt-[7px] flex h-[325px] shrink-0 flex-col border border-[#828790] bg-white">
        <table className="w-full table-fixed text-left whitespace-nowrap">
          <colgroup><col className="w-[134px]" /><col /></colgroup>
          <thead><tr className="h-[26px]"><th className="border-r border-[#e2e2e2] pl-[6px] font-normal">Name</th><th className="pl-[6px] font-normal">Index URL</th></tr></thead>
          <tbody>
            {REPOS.map(([n, u], i) => (
              <tr key={i} className="h-[17px]">
                <td className="p-0 pl-[6px]">
                  <label className="relative flex h-[17px] items-center gap-[3px]">
                    <input type="checkbox" defaultChecked className="peer h-[13px] w-[13px] appearance-none border-2 border-[#1d1d1d] bg-white" />
                    <svg viewBox="0 0 9 9" className="pointer-events-none absolute left-[2px] hidden h-[9px] w-[9px] peer-checked:block" stroke="#000" strokeWidth="2" fill="none"><path d="M1 4l2.500 3L8 1.500" /></svg>
                    {n}
                  </label>
                </td>
                <td className="p-0 pl-[6px]">{u}</td>
              </tr>
            ))}
          </tbody>
        </table>
        <div className="mx-px mt-auto mb-[2px] flex h-[15px] items-center bg-[#f0f0f0]">
          <span className="flex w-[17px] justify-center"><Chev d="left" className="text-[#505050]" /></span>
          <span className="h-full flex-1 bg-[#cdcdcd]" />
          <span className="flex w-[24px] justify-end pr-[3px]"><Chev d="right" className="text-[#505050]" /></span>
        </div>
      </div>
      <div className="mt-[7px] flex gap-[6px] pr-[9px] pl-[8px]">
        <Push className="w-[111px]">Browse packages</Push><Push className="w-[96px]">Import/export...</Push><Push className="w-[66px]">Options...</Push>
        <Push className="ml-auto w-[58px]">OK</Push><Push className="w-[58px]">Cancel</Push>
        <button disabled className="h-[21px] w-[58px] border border-[#bfbfbf] bg-[#ccc] text-[#838383]">Apply</button>
      </div>
      <span className="pointer-events-none absolute top-[285px] left-[12px] h-[24px] w-[463px] border-3 border-[#f00]" />
    </section>
  );
}

function ImportWindow() {
  return (
    <section className={`absolute top-[288px] left-[675px] flex h-[162px] w-[436px] flex-col border border-[#9c9f9f] bg-[#f0f0f0] text-[11px] text-black font-['Liberation_Sans',sans-serif] ${SHADOW}`}>
      <header className="flex h-[25px] shrink-0 items-center justify-between bg-white pr-[9px] pl-[2px]">
        <h2 className={`text-[#8c8c8c] ${UI}`}>Import repositories</h2>
        <button aria-label="Close dialog"><Cross /></button>
      </header>
      <div className="flex flex-col pt-[8px] pr-[10px] pl-[7px]">
        <label htmlFor="urls" className="leading-[14px]">Type or paste one or more repository index URLs (one per line):</label>
        <div className="mt-[7px] flex h-[65px] border border-[#7a7a7a] bg-white">
          <textarea id="urls" className="min-w-0 flex-1 resize-none px-1 outline-none" />
          <div className="m-px flex w-[16px] flex-col items-center justify-between bg-[#f0f0f0] py-[3px]"><Chev d="up" /><Chev d="down" /></div>
        </div>
        <div className="mt-[12px] flex gap-[6px]"><Push className="ml-px w-[133px]">Discover repositories...</Push><Push className="ml-auto w-[58px]">OK</Push><Push className="w-[58px]">Cancel</Push></div>
      </div>
    </section>
  );
}

function ErrorWindow() {
  return (
    <section className={`absolute top-[238px] left-[1166px] flex h-[330px] w-[419px] flex-col border-3 border-[#f00] ${UI} text-[11px] text-black ${SHADOW}`}>
      <div className="flex flex-1 flex-col border border-t-0 border-l-0 border-[#00b7c7] bg-white">
        <header className="flex h-[26px] shrink-0 items-center justify-between bg-[#00b7c7] pr-[10px] pl-[3px]">
          <h2>ERROR</h2>
          <button aria-label="Dismiss"><Cross className="text-black" /></button>
        </header>
        <div className="flex flex-1 flex-col gap-[13px] pt-[23px] pl-[11px] leading-[13px] whitespace-nowrap">
          <p>This script requires an up-to-date version of the js_ReaScriptAPI<br />extension.</p>
          <p>The js_ReaScripAPI extension can be installed via ReaPack, or can be<br />downloaded manually.</p>
          <p>To install via ReaPack, ensure that the ReaTeam/Extensions repository is<br />enabled. This repository should be enabled by default in recent versions<br />of ReaPack, but if not, the repository can be added using the URL that<br />the script will copy to REAPER's Console.</p>
          <p>(In REAPER's menu, go to Extensions -&gt; ReaPack -&gt; Import a repository.)</p>
          <p>To install the extension manually, download the most recent version<br />from Github, using the second URL copied to the console, and copy it<br />to REAPER's UserPlugins directory.</p>
        </div>
        <footer className="flex h-[43px] shrink-0 items-center justify-end bg-[#f0f0f0] pr-[17px] pb-[2px]">
          <button className="h-[21px] w-[73px] border-2 border-[#0078d7] bg-[#e1e1e1] leading-4">OK</button>
        </footer>
      </div>
    </section>
  );
}

/* ---------- MIDI editor ---------- */
const DARK_ROWS = [0, 3, 5, 8, 10, 12];
const WHITE_EDGES = [3, 24, 44, 64, 84, 105, 126, 147, 168];
function RollKeys() {
  return (
    <svg viewBox="0 0 129 176" className="h-[176px] w-[129px] shrink-0">
      <defs>
        <linearGradient id="wk" x1="0" x2="1"><stop offset="0" stopColor="#cfcfcf" /><stop offset=".8" stopColor="#ececec" /><stop offset="1" stopColor="#dadada" /></linearGradient>
        <linearGradient id="bk" x1="0" x2="1"><stop offset="0" stopColor="#555" /><stop offset="1" stopColor="#333" /></linearGradient>
      </defs>
      <rect width="127" height="176" fill="url(#wk)" />
      {WHITE_EDGES.map((y) => <g key={y}><path d={`M0 ${y + 1.5}h126`} stroke="#fafafa" /><path d={`M0 ${y + 0.5}h127`} stroke="#000" /></g>)}
      {DARK_ROWS.map((r) => (
        <g key={r}>
          <rect x="0" y={r * 12} width="74" height="16" fill="#000" opacity=".35" />
          <rect x="0" y={r * 12 - 1} width="73" height="15" fill="#222" />
          <path d={`M0 ${r * 12 + 0.5}h73`} stroke="#7a7a7a" />
          <rect x="0" y={r * 12 + 1} width="67" height="12" fill="url(#bk)" />
          <path d={`M68 ${r * 12 + 2}l4-2v13l-4-3z`} fill="#555" />
        </g>
      ))}
      <rect x="126" width="3" height="176" fill="#6d7070" />
      <text x="124" y="78" textAnchor="end" fontSize="10" fontFamily="Inter, sans-serif" fill="#111">C4</text>
    </svg>
  );
}
function MidiRoll() {
  return (
    <div className="relative min-w-0 flex-1 overflow-hidden">
      {Array.from({ length: 15 }, (_, r) => {
        const dark = DARK_ROWS.includes(r);
        return (
          <div key={r} className={`flex h-[12px] ${r === 2 || r === 7 || r === 14 ? "border-t border-[#c0c0c0]" : ""}`}>
            <span className={`w-[441px] ${dark ? "bg-[#e1e1e1]" : "bg-[#eaeaea]"}`} />
            <span className={`flex-1 ${dark ? "bg-[#c6c6c6]" : "bg-[#d8d8d8]"}`} />
          </div>
        );
      })}
      <div className="absolute inset-y-0 left-0 grid w-[993px] grid-cols-[repeat(36,minmax(0,1fr))]">
        {Array.from({ length: 36 }, (_, i) => <span key={i} className={`border-l ${i % 4 ? "border-[#8b8b8b]" : "border-[#6a6a6a]"}`} />)}
      </div>
      {[0, 1].map((g) => (
        <div key={g} className={`absolute left-0 w-[441px] border-t border-black ${g ? "top-[132px]" : "top-[72px]"}`}>
          {[0, 1, 2].map((n) => <div key={n} className={`h-[12px] bg-[#8a4d00] ${n < 2 ? "border-b-2" : "border-b"} border-black`} />)}
        </div>
      ))}
    </div>
  );
}
function MidiWindow() {
  return (
    <section className={`absolute top-[624px] bottom-0 left-[274px] flex w-[1365px] flex-col overflow-hidden border border-b-0 border-[#8c8f8f] bg-[#b9bfbf] ${SHADOW}`}>
      <header className="flex h-[29px] shrink-0 items-center bg-white pl-[6px]">
        <svg viewBox="0 0 18 18" className="h-[17px] w-[17px]"><path d="M2 3c4-4 11-4 14 0-3 0-5 1-7 2-2-1-4-2-7-2z" fill="#2f86c8" /><path d="M2 4C-1 9 4 16 9 17l2-2C7 12 9 8 6 5z" fill="#5bb531" /><path d="M16 4c3 5-1 11-5 12 1-4-2-7-1-10 2-2 4-2 6-2z" fill="#a84438" /><path d="M3 4c4 0 6 2 7 5s2 5 1 7" stroke="#e5e5e5" fill="none" strokeWidth="1.500" /></svg>
        <h2 className={`ml-[5px] flex-1 text-[#8c8c8c] ${UI} text-[11px]`}>MIDI take: untitled MIDI item</h2>
        <button aria-label="Pin window"><Pin /></button>
        <button aria-label="Minimize" className="flex w-[56px] justify-center"><span className="h-px w-[10px] bg-[#dcdcdc]" /></button>
        <button aria-label="Maximize" className="flex w-[36px] justify-center"><span className="h-[11px] w-[11px] border border-[#777]" /></button>
        <button aria-label="Close editor" className="mr-[17px] ml-[23px]"><Cross className="text-[#666]" /></button>
      </header>
      <Menu className="h-[21px] gap-px border-b-2 border-[#ececec] bg-white pt-[2px]" items={["File", "Edit", "Navigate", "Options", "View", "Contents", "Actions"]} />
      <div className="mx-px mt-[2px] shrink-0 bg-[#333] pt-[15px] pb-[15px]"><Toolbar groups={MIDI_TOOLS} /></div>
      <div className="flex min-h-0 flex-1 pl-px">
        <div className="flex min-w-0 flex-1 flex-col">
          <div className="flex h-[40px] shrink-0 gap-[5px] pt-[9px] pl-[7px] font-['Liberation_Sans',sans-serif] text-[11px]">
            {["9.4.12", "G#3  56"].map((t) => <span key={t} className="flex h-[18px] w-[52px] items-center justify-center border border-[#2d2d2d] bg-[#cdd2d3] whitespace-pre text-[#222]">{t}</span>)}
          </div>
          <div className="relative mr-[18px] ml-[129px] h-[28px] shrink-0 overflow-hidden">
            <div className="grid h-full w-[993px] grid-cols-9 font-['Liberation_Sans',sans-serif] font-bold text-[#333]">
              {[1, 2, 3, 4, 5, 6, 7, 8, 9].map((n) => (
                <div key={n} className={`border-l ${n === 1 ? "border-transparent" : "border-[#333]"}`}>
                  <div className="pl-[3px] text-[13px] leading-[18px]">{n}</div>
                  <div className="-mt-[6px] pr-[3px] text-center text-[10px] leading-[13px]">{n}.3</div>
                </div>
              ))}
            </div>
            <svg viewBox="0 0 20 10" className="absolute bottom-px left-[100px] h-[10px] w-[20px]"><path d="M.5.5h19L10.500 9.500z" fill="#c97c7c" fillOpacity=".7" stroke="#a82222" /></svg>
          </div>
          <div className="relative flex min-h-0 flex-1 overflow-hidden">
            <RollKeys />
            <MidiRoll />
            <div className="flex w-[18px] shrink-0 flex-col items-center border-x-2 border-t border-[#2d2d2d] bg-[#585858] pt-[1px]">
              <svg viewBox="0 0 14 14" className="h-[14px] w-[14px]"><circle cx="7" cy="7" r="6" fill="#aaa" stroke="#333" /><path d="M4.500 8.500h5L7 5z" fill="#000" /></svg>
            </div>
            <span className="pointer-events-none absolute inset-y-0 left-[239px] w-px bg-[#b32222]" />
          </div>
        </div>
        <div className="mt-[4px] ml-px w-[242px] shrink-0 border-l-2 border-[#666] pr-[4px] pl-[4px]">
          <div className="flex h-[18px] items-center border border-[#e6e6e6] bg-[#3399ff] text-[10px] font-['Liberation_Sans',sans-serif]">
            <svg viewBox="0 0 14 14" className="h-[14px] w-[14px]"><path d="M7 .7L13.300 7 7 13.300.7 7z" fill="#dcdcdc" stroke="#222" /><path d="M5 4.500v5L9.500 7z" fill="#111" /></svg>
            <span className="flex-1 pr-[7px] text-right text-[11px] text-white">1</span>
            <input type="checkbox" aria-label="Show lane" className="mr-[2px] h-[12px] w-[12px] appearance-none border border-white" />
            <button aria-label="Route" className="flex h-full w-[17px] items-center justify-center border-l border-[#dcdcdc]"><svg viewBox="0 0 14 14" className="h-[14px] w-[14px]"><path d="M1 2c6 0 6 1 6 5" stroke="#077a14" strokeWidth="2" fill="none" /><path d="M3 6h8L7 10.500z" fill="#077a14" /><path d="M3 12.500h10" stroke="#40d060" strokeWidth="2" /></svg></button>
            <button aria-label="Unlock" className="flex h-full w-[17px] items-center justify-center border-l border-[#dcdcdc]"><svg viewBox="0 0 14 14" className="h-[14px] w-[14px]"><path d="M1 6h9v7H1z" fill="#077a14" /><path d="M8 6V4c0-3 5-3 5 0v2" stroke="#077a14" strokeWidth="1.700" fill="none" /></svg></button>
            <button aria-label="Visible" className="flex h-full w-[17px] items-center justify-center border-l border-[#dcdcdc]"><svg viewBox="0 0 14 14" className="h-[14px] w-[14px]"><path d="M1 7c3-5 9-5 12 0-3 5-9 5-12 0z" fill="#8fa6b8" stroke="#223" /><circle cx="7" cy="7" r="3" fill="#1d2a44" /></svg></button>
            <button aria-label="Record" className="flex h-full w-[17px] items-center justify-center border-l border-[#dcdcdc]"><svg viewBox="0 0 14 14" className="h-[14px] w-[14px]"><circle cx="7" cy="7" r="6" fill="#c41623" stroke="#7a0a14" /><circle cx="7" cy="7" r="3.200" fill="none" stroke="#fff" /><circle cx="7" cy="7" r="1.200" fill="#fff" /></svg></button>
            <button className="h-full w-[17px] border-l border-white bg-[#ccc] font-bold text-[#6b1717]">M</button>
            <button className="h-full w-[17px] border-l border-white bg-[#ccc] font-bold text-[#6a6a1b]">S</button>
          </div>
        </div>
      </div>
    </section>
  );
}

/* ---------- bottom of the main window ---------- */
function Keyboard() {
  const blacks = [12, 36, 72, 96, 120, 156, 180];
  return (
    <svg viewBox="0 0 200 63" className="h-[63px] w-[200px]">
      <rect width="200" height="63" fill="#e6e6e6" />
      {[20, 40, 60, 80, 100, 123, 144, 164, 184].map((x) => <path key={x} d={`M${x + 0.5} 0v63`} stroke="#111" />)}
      {blacks.map((x) => <g key={x}><rect x={x - 1} width="16" height="45" fill="#777" /><rect x={x} width="13" height="44" fill="#262626" /><rect x={x + 2} width="9" height="38" fill="#4c4c4c" /></g>)}
      <path d="M0 .5h200" stroke="#000" />
      <g fontSize="9" fontFamily="Inter, sans-serif" fill="#222"><text x="4" y="66">C-1</text><text x="149" y="66">C0</text></g>
    </svg>
  );
}

export default function App() {
  return (
    <div className="relative flex h-screen min-h-[700px] flex-col overflow-hidden bg-[#333] select-none">
      <div className={`flex h-[5px] shrink-0 items-end overflow-hidden bg-white pb-[2px] pl-[6px] text-[11px] leading-[12px] text-[#8c8c8c] ${UI}`}>
        <svg viewBox="0 0 16 16" className="h-[14px] w-[13px] shrink-0"><path d="M1 2h8v13C4 13 0 8 1 2z" fill="#5bb531" /><path d="M8 2h7c1 6-3 11-7 13z" fill="#c0392b" /></svg>
        <span className="ml-[4px]">[unsaved project]</span>
      </div>
      <div className="flex h-[21px] shrink-0 items-center justify-between border-b-2 border-[#ececec] bg-white">
        <div className="flex"><Menu items={["File", "Edit", "View", "Insert", "Item", "Track", "Options", "Actions", "Extensions", "Help"]} /><span className={`ml-[17px] text-[11px] text-[#4d4d4d] ${UI}`}>[ReaScript: Run]</span></div>
        <div className={`flex w-[450px] justify-between overflow-hidden text-[11px] whitespace-nowrap text-[#4d4d4d] ${UI}`}><span>D:\Unsaved project</span><span>ASIO]</span></div>
      </div>
      <div className="shrink-0 overflow-hidden bg-[#333] pt-[2px] pb-[3px]"><Toolbar groups={MAIN_TOOLS} className="pl-[36px]" /></div>
      <div className="flex min-h-0 flex-1">
        <LeftDock />
        <div className="w-[8px] shrink-0 border-x border-[#262626] bg-[#2e2e2e]" />
        <div className="flex min-w-0 flex-1 flex-col">
          <div className="flex min-h-0 flex-1">
            <div className="flex w-[341px] shrink-0 flex-col">
              <div className="flex flex-col pt-[2px] pb-[5px]"><Toolbar groups={TCP_ROW1} /><Toolbar groups={TCP_ROW2} /></div>
              <TrackPanel />
              <div className="flex-1 bg-[#333]" />
            </div>
            <div className="w-[7px] shrink-0 border-x border-[#262626] bg-[#2e2e2e]" />
            <Arrange />
          </div>
          <div className={`ml-[3px] h-[20px] shrink-0 border-t border-[#666] pl-[1px] text-[9px] leading-[18px] whitespace-nowrap text-[#c2c2c2] ${PIX}`}>untitled MIDI item [start] 1.1.00 [end] 5.1.00</div>
          <div className="flex h-[43px] shrink-0 gap-[8px] border border-[#262626] bg-[#353535] px-[2px] py-[3px] text-[#8f9292]">
            <div className={`flex w-[59px] shrink-0 flex-col gap-[2px] rounded-[2px] border-2 border-[#222] bg-[#3b3b3b] px-[1px] pt-[2px] text-[8px] font-bold leading-[9px] whitespace-nowrap ${PIX}`}>
              <span className="-mx-px text-center text-[7px]">GLOBAL AUTO</span>
              <button className="flex h-[14px] items-center border border-[#262626] text-[7px] text-[#6d6d6d]"><span className="flex w-[16px] justify-center border-r border-[#262626]"><svg viewBox="0 0 12 10" className="h-[9px] w-[11px]" stroke="#8a8a8a" strokeWidth="1.500" fill="none"><path d="M1 8h2l3-5 3 5h2" /></svg></span><span className="flex-1">NONE</span></button>
            </div>
            <div className="flex-1 rounded-[2px] border-2 border-[#222] bg-linear-to-b from-[#2d2d2d] to-[#3b3b3b] pl-[105px] text-[18px] font-bold leading-[28px] font-['Liberation_Sans',sans-serif]">0.00</div>
          </div>
          <div className="flex h-[68px] shrink-0 items-end border-l-4 border-[#3f4646]"><Keyboard /></div>
        </div>
        <RightDock />
      </div>
      <PerformanceMeter />
      <ConsoleWindow />
      <ManageWindow />
      <ImportWindow />
      <ErrorWindow />
      <MidiWindow />
    </div>
  );
}
